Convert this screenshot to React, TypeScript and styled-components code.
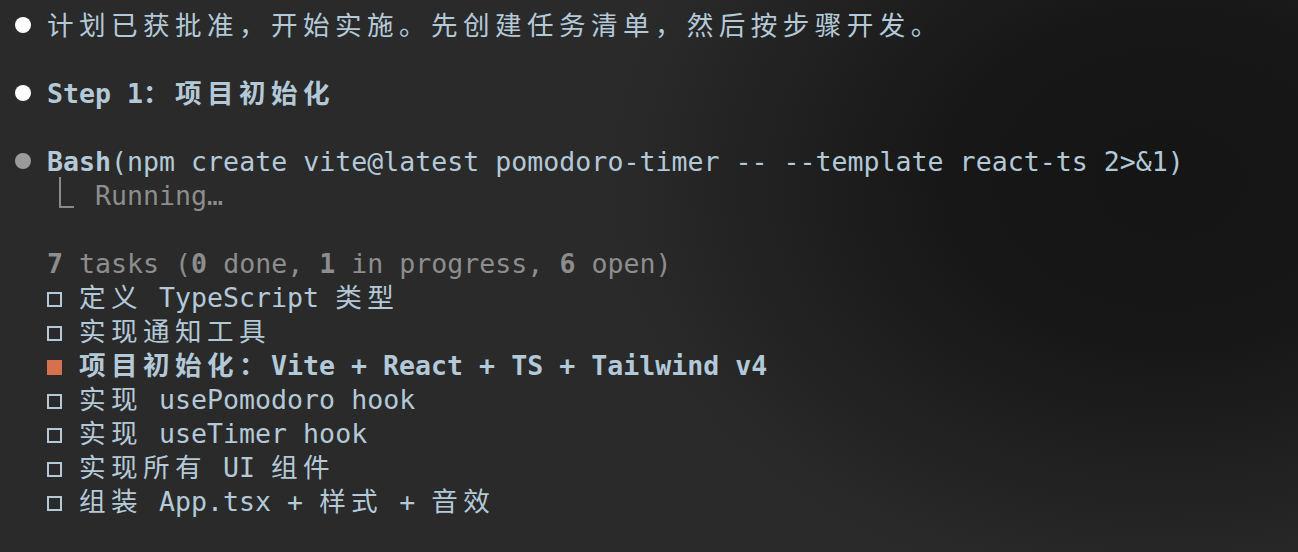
import React from "react";
import styled, { createGlobalStyle } from "styled-components";

const Global = createGlobalStyle`
  html, body { margin: 0; padding: 0; background: #2a2a2a; }
  body { width: 1298px; height: 552px; overflow: hidden; }
`;

const Terminal = styled.div`
  box-sizing: border-box;
  width: 1298px;
  height: 552px;
  padding: 9px 0 0 15px;
  background:
    radial-gradient(ellipse 560px 420px at 1170px 180px, #151515 0%, #171717 40%, rgba(42,42,42,0) 100%),
    #2a2a2a;
  font-family: "DejaVu Sans Mono", "Noto Sans CJK SC", monospace;
  font-size: 26.6px;
  color: #b4c9d8;
  display: flex;
  flex-direction: column;
`;

const Line = styled.div<{ $indent?: number }>`
  height: 34px;
  display: flex;
  align-items: center;
  white-space: pre;
  padding-left: ${(p) => (p.$indent ?? 0)}px;
`;

const Blank = styled.div`
  height: 34px;
`;

const BulletCell = styled.span`
  width: 32px;
  height: 34px;
  flex: none;
  display: flex;
  align-items: center;
`;

const Dot = styled.span<{ $color: string }>`
  width: 16px;
  height: 16px;
  margin-bottom: 2px;
  border-radius: 50%;
  background: ${(p) => p.$color};
`;

const BoxCell = styled.span`
  width: 32px;
  height: 34px;
  flex: none;
  display: flex;
  align-items: center;
`;

const Box = styled.span<{ $active?: boolean }>`
  box-sizing: border-box;
  width: 15px;
  height: 15px;
  margin-top: 3px;
  border: ${(p) => (p.$active ? "none" : "2px solid #b4c9d8")};
  background: ${(p) => (p.$active ? "#d6714f" : "transparent")};
`;

const Txt = styled.span<{ $bold?: boolean; $dim?: boolean }>`
  line-height: 34px;
  font-weight: ${(p) => (p.$bold ? 700 : 400)};
  color: ${(p) => (p.$dim ? "#8d8d8d" : "inherit")};
`;

const Cjk = styled.span`
  font-family: "Noto Sans CJK SC", sans-serif;
  letter-spacing: 5.4px;
  line-height: 0;
`;

const Elbow = styled.span`
  box-sizing: border-box;
  flex: none;
  width: 15px;
  height: 31px;
  margin: 0 21px 5px 44px;
  border-left: 2px solid #8a8a8a;
  border-bottom: 2px solid #8a8a8a;
  align-self: flex-end;
`;

const cjkRe = /([\u3000-\u303f\u4e00-\u9fff\uff00-\uffef]+)/;

const T: React.FC<{ children: string; bold?: boolean; dim?: boolean }> = ({ children, bold, dim }) => (
  <Txt $bold={bold} $dim={dim}>
    {children.split(cjkRe).map((part, i) =>
      part === "" ? null : cjkRe.test(part) ? <Cjk key={i}>{part}</Cjk> : <React.Fragment key={i}>{part}</React.Fragment>
    )}
  </Txt>
);

type Task = { text: string; active?: boolean };

const tasks: Task[] = [
  { text: "定义 TypeScript 类型" },
  { text: "实现通知工具" },
  { text: "项目初始化：Vite + React + TS + Tailwind v4", active: true },
  { text: "实现 usePomodoro hook" },
  { text: "实现 useTimer hook" },
  { text: "实现所有 UI 组件" },
  { text: "组装 App.tsx + 样式 + 音效" },
];

export default function App() {
  return (
    <>
      <Global />
      <Terminal>
        <Line>
          <BulletCell><Dot $color="#ffffff" /></BulletCell>
          <T>计划已获批准，开始实施。先创建任务清单，然后按步骤开发。</T>
        </Line>
        <Blank />
        <Line>
          <BulletCell><Dot $color="#ffffff" /></BulletCell>
          <T bold>Step 1：项目初始化</T>
        </Line>
        <Blank />
        <Line>
          <BulletCell><Dot $color="#9b9b9b" /></BulletCell>
          <T bold>Bash</T>
          <T>(npm create vite@latest pomodoro-timer -- --template react-ts 2&gt;&amp;1)</T>
        </Line>
        <Line>
          <Elbow />
          <T dim>Running…</T>
        </Line>
        <Blank />
        <Line $indent={32}>
          <T dim bold>7</T>
          <T dim> tasks (</T>
          <T dim bold>0</T>
          <T dim> done, </T>
          <T dim bold>1</T>
          <T dim> in progress, </T>
          <T dim bold>6</T>
          <T dim> open)</T>
        </Line>
        {tasks.map((t, i) => (
          <Line key={i} $indent={32}>
            <BoxCell><Box $active={t.active} /></BoxCell>
            <T bold={t.active}>{t.text}</T>
          </Line>
        ))}
      </Terminal>
    </>
  );
}
